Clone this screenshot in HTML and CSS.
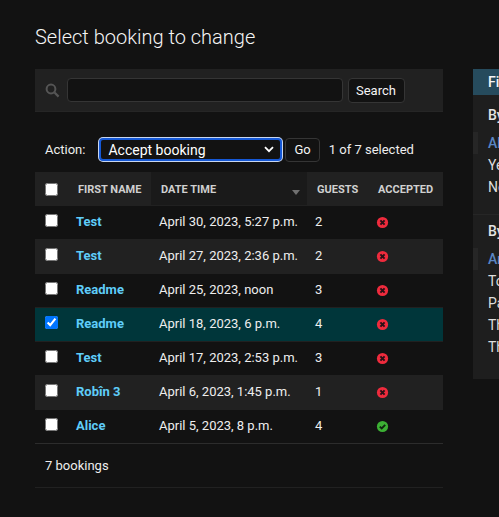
FILE: index.html
```html
<!DOCTYPE html>
<html lang="en">
<head>
  <meta charset="UTF-8">
  <title>Select booking to change</title>
  <link rel="stylesheet" href="styles.css">
</head>
<body>
  <div class="content">
    <h1>Select booking to change</h1>
    <div class="layout">
      <div class="changelist">
        <form class="toolbar">
          <svg class="search-icon" width="15" height="15" viewBox="0 0 15 15"><circle cx="6" cy="6" r="4.4" fill="none" stroke="#555" stroke-width="2"/><path d="M9.5 9.5L13.6 13.6" stroke="#555" stroke-width="2.2"/></svg>
          <input type="text" class="search-input">
          <button type="button" class="btn btn-search">Search</button>
        </form>

        <div class="actions">
          <label class="action-label">Action:</label>
          <div class="fake-select">
            <span>Accept booking</span>
            <svg width="10" height="7" viewBox="0 0 10 7"><path d="M1 1.2L5 5.2L9 1.2" fill="none" stroke="#fff" stroke-width="1.8"/></svg>
          </div>
          <button type="button" class="btn btn-go">Go</button>
          <span class="counter">1 of 7 selected</span>
        </div>

        <table class="results">
          <thead>
            <tr>
              <th class="col-check"><input type="checkbox"></th>
              <th class="col-name">First name</th>
              <th class="col-date sorted">Date time<span class="sort-arrow"></span></th>
              <th class="col-guests">Guests</th>
              <th class="col-acc">Accepted</th>
            </tr>
          </thead>
          <tbody>
            <tr>
              <td><input type="checkbox"></td>
              <td><a href="#">Test</a></td>
              <td>April 30, 2023, 5:27 p.m.</td>
              <td>2</td>
              <td><svg class="ico" viewBox="0 0 13 13"><use href="#no"/></svg></td>
            </tr>
            <tr class="alt">
              <td><input type="checkbox"></td>
              <td><a href="#">Test</a></td>
              <td>April 27, 2023, 2:36 p.m.</td>
              <td>2</td>
              <td><svg class="ico" viewBox="0 0 13 13"><use href="#no"/></svg></td>
            </tr>
            <tr>
              <td><input type="checkbox"></td>
              <td><a href="#">Readme</a></td>
              <td>April 25, 2023, noon</td>
              <td>3</td>
              <td><svg class="ico" viewBox="0 0 13 13"><use href="#no"/></svg></td>
            </tr>
            <tr class="selected">
              <td><input type="checkbox" checked></td>
              <td><a href="#">Readme</a></td>
              <td>April 18, 2023, 6 p.m.</td>
              <td>4</td>
              <td><svg class="ico" viewBox="0 0 13 13"><use href="#no"/></svg></td>
            </tr>
            <tr>
              <td><input type="checkbox"></td>
              <td><a href="#">Test</a></td>
              <td>April 17, 2023, 2:53 p.m.</td>
              <td>3</td>
              <td><svg class="ico" viewBox="0 0 13 13"><use href="#no"/></svg></td>
            </tr>
            <tr class="alt">
              <td><input type="checkbox"></td>
              <td><a href="#">Robîn 3</a></td>
              <td>April 6, 2023, 1:45 p.m.</td>
              <td>1</td>
              <td><svg class="ico" viewBox="0 0 13 13"><use href="#no"/></svg></td>
            </tr>
            <tr>
              <td><input type="checkbox"></td>
              <td><a href="#">Alice</a></td>
              <td>April 5, 2023, 8 p.m.</td>
              <td>4</td>
              <td><svg class="ico" viewBox="0 0 13 13"><use href="#yes"/></svg></td>
            </tr>
          </tbody>
        </table>
        <p class="paginator">7 bookings</p>
      </div>

      <aside class="filter">
        <h2>Filter</h2>
        <h3>By accepted</h3>
        <ul>
          <li class="current"><a href="#">All</a></li>
          <li><a href="#">Yes</a></li>
          <li><a href="#">No</a></li>
        </ul>
        <h3>By date time</h3>
        <ul>
          <li class="current"><a href="#">Any date</a></li>
          <li><a href="#">Today</a></li>
          <li><a href="#">Past 7 days</a></li>
          <li><a href="#">This month</a></li>
          <li><a href="#">This year</a></li>
        </ul>
      </aside>
    </div>
  </div>

  <svg class="defs" width="0" height="0">
    <symbol id="no" viewBox="0 0 13 13"><circle cx="6.5" cy="6.5" r="5.6" fill="#ef2b3d"/><path d="M4.4 4.4L8.6 8.6M8.6 4.4L4.4 8.6" stroke="#2a1015" stroke-width="2"/></symbol>
    <symbol id="yes" viewBox="0 0 13 13"><circle cx="6.5" cy="6.5" r="5.6" fill="#3cb034"/><path d="M3.8 6.6L5.7 8.4L9.2 4.8" fill="none" stroke="#10260f" stroke-width="1.9"/></symbol>
  </svg>
</body>
</html>
```

FILE: styles.css
```css
body {
  margin: 0;
  background: #121212;
  color: #eee;
  font-family: Roboto, "Liberation Sans", sans-serif;
  font-size: 13px;
  overflow: hidden;
}
a {
  text-decoration: none;
}
.content {
  padding: 25px 0 0 35px;
}
h1 {
  margin: 0 0 20px;
  font-size: 20px;
  font-weight: 300;
  line-height: 24px;
  color: #f5f5f5;
}
.layout {
  display: flex;
  align-items: flex-start;
  gap: 30px;
  width: 638px;
}
.changelist {
  width: 408px;
  flex: none;
}
.toolbar {
  display: flex;
  align-items: center;
  height: 43px;
  padding: 0 0 0 10px;
  background: #212121;
  box-sizing: border-box;
  border-bottom: 1px solid #262626;
}
.search-icon {
  margin-right: 7px;
  flex: none;
}
.search-input {
  width: 276px;
  height: 24px;
  box-sizing: border-box;
  padding: 0 8px;
  background: #121212;
  border: 1px solid #353535;
  border-radius: 4px;
  color: #fff;
}
.btn {
  height: 25px;
  padding: 0 8px;
  background: #121212;
  border: 1px solid #353535;
  border-radius: 4px;
  color: #f5f5f5;
  font-family: inherit;
  font-size: 13px;
}
.btn-search {
  margin-left: 5px;
  padding-left: 7px;
}
.actions {
  display: flex;
  align-items: center;
  height: 25px;
  margin-top: 25px;
  margin-bottom: 10px;
}
.action-label {
  margin-left: 10px;
  margin-right: 14px;
}
.fake-select {
  display: flex;
  align-items: center;
  justify-content: space-between;
  width: 183px;
  height: 23px;
  box-sizing: border-box;
  padding: 0 6px 0 7px;
  background: #121212;
  border: 2px solid #1558d6;
  box-shadow: 0 0 0 1px #c8d6f0;
  border-radius: 4px;
  color: #fff;
  font-size: 14px;
}
.btn-go {
  height: 24px;
  margin-left: 3px;
}
.counter {
  margin-left: 9px;
}
.results {
  width: 100%;
  border-collapse: collapse;
  table-layout: fixed;
}
.results th {
  height: 33px;
  box-sizing: border-box;
  padding: 2px 0 0 10px;
  background: #212121;
  color: #d0d0d0;
  font-size: 11px;
  font-weight: 700;
  text-align: left;
  text-transform: uppercase;
  position: relative;
}
.results th.sorted {
  background: #1a1a1a;
}
.col-check { width: 33px; }
.col-name { width: 83px; }
.col-date { width: 156px; }
.col-guests { width: 61px; }
.sort-arrow {
  position: absolute;
  right: 7px;
  top: 18px;
  border-left: 4.5px solid transparent;
  border-right: 4.5px solid transparent;
  border-top: 5px solid #707070;
}
.results td {
  height: 34px;
  box-sizing: border-box;
  padding: 0 0 2px 8px;
  border-top: 1px solid #212121;
}
.results th:first-child, .results td:first-child {
  padding-left: 10px;
}
.results td:first-child {
  padding-bottom: 3px;
}
.results a {
  color: #5fcdf9;
  font-weight: 700;
}
.results tbody tr:last-child td {
  border-bottom: 1px solid #2c2c2c;
}
input[type="checkbox"] {
  display: block;
  width: 13px;
  height: 13px;
  margin: 0;
}
.alt td {
  background: #212121;
}
.selected td {
  background: #00363a;
}
.ico {
  display: block;
  width: 13px;
  height: 13px;
  margin-top: 2px;
}
.paginator {
  margin: 0;
  padding: 14px 0 14px 10px;
  line-height: 15px;
  border-bottom: 1px solid #212121;
}
.filter {
  width: 200px;
  flex: none;
  background: #1e1e1e;
  padding-bottom: 21px;
}
.filter h2 {
  margin: 0 0 4px;
  padding: 6px 15px;
  background: #264b5d;
  color: #f5f5f5;
  font-size: 14px;
  font-weight: 500;
  line-height: 14px;
}
.filter h3 {
  margin: 0;
  padding: 8px 15px 9px;
  font-size: 14px;
  font-weight: 500;
  line-height: 16px;
  color: #e4e4e4;
}
.filter ul {
  margin: 0;
  padding: 0 0 16px;
  list-style: none;
  border-bottom: 1px solid #262626;
}
.filter ul:last-child {
  padding-bottom: 0;
  border-bottom: none;
}
.filter li {
  padding-left: 15px;
  font-size: 14px;
  line-height: 22px;
}
.filter .current {
  padding-left: 10px;
  border-left: 5px solid #262626;
}
.filter a {
  color: #ddd;
}
.filter .current a {
  color: #5b86c4;
  font-weight: 500;
}
.defs {
  position: absolute;
}
```
